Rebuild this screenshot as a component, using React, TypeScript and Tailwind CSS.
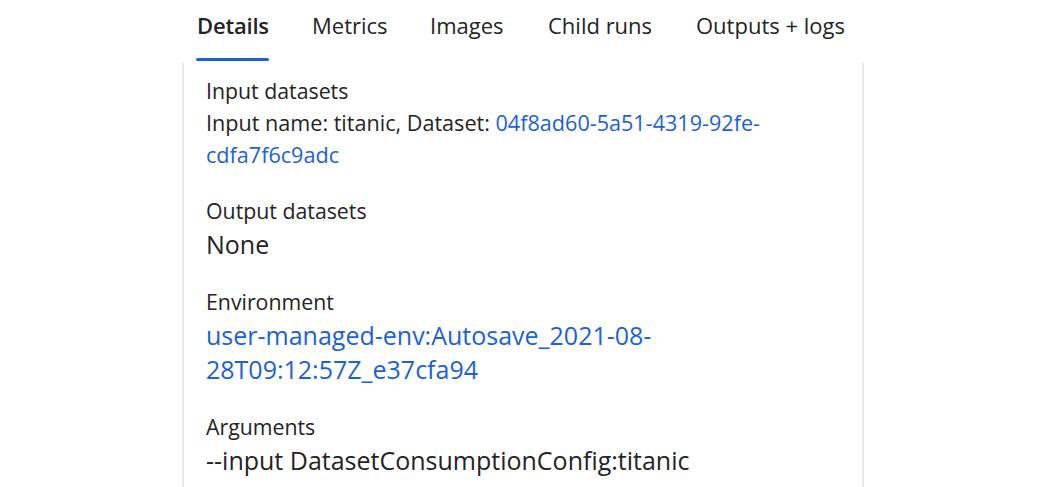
import React from 'react';

const tabs = [
  { label: 'Details', width: 'w-[115px]', active: true },
  { label: 'Metrics', width: 'w-[118px]' },
  { label: 'Images', width: 'w-[118px]' },
  { label: 'Child runs', width: 'w-[148px]' },
  { label: 'Outputs + logs', width: 'w-[160px]' },
];

function Field({ label, children }: { label: string; children: React.ReactNode }) {
  return (
    <div className="flex flex-col">
      <div className="text-[21.3px] leading-[32px] text-[#242424] whitespace-nowrap">{label}</div>
      {children}
    </div>
  );
}

export default function App() {
  return (
    <div
      className="w-[1049px] h-[487px] overflow-hidden bg-white text-[#242424]"
      style={{ fontFamily: '"Open Sans", "Noto Sans", sans-serif' }}
    >
      <div className="ml-[182px] w-[682px]">
        {/* Tabs */}
        <div className="flex pl-[15px] h-[63px]">
          {tabs.map((t) => (
            <div key={t.label} className={`${t.width} flex flex-col shrink-0`}>
              <div
                className={`h-[58px] pt-[9px] text-[22px] leading-[32px] whitespace-nowrap ${
                  t.active ? 'font-semibold tracking-[-0.2px]' : 'font-normal tracking-[0px]'
                }`}
              >
                {t.label}
              </div>
              {t.active && <div className="h-[3px] w-[73px] -ml-[1px] rounded-full bg-[#1b62d6]" />}
            </div>
          ))}
        </div>

        {/* Panel */}
        <div className="border-l-2 border-r-2 border-[#e7e9ee] h-[424px] pl-[22px] pt-[12px] flex flex-col gap-[25px]">
          <Field label="Input datasets">
            <div className="text-[21.6px] leading-[32px] whitespace-nowrap">
              Input name: titanic, Dataset: <span className="text-[#1b62d6]">04f8ad60-5a51-4319-92fe-</span>
            </div>
            <div className="text-[21.6px] leading-[31px] text-[#1b62d6] whitespace-nowrap">cdfa7f6c9adc</div>
          </Field>

          <Field label="Output datasets">
            <div className="text-[25px] leading-[34px]">None</div>
          </Field>

          <Field label="Environment">
            <div className="text-[25px] leading-[34px] text-[#1b62d6] whitespace-nowrap">
              user-managed-env:Autosave_2021-08-
            </div>
            <div className="text-[25px] leading-[34px] text-[#1b62d6] whitespace-nowrap">28T09:12:57Z_e37cfa94</div>
          </Field>

          <Field label="Arguments">
            <div className="text-[25px] leading-[34px] whitespace-nowrap">--input DatasetConsumptionConfig:titanic</div>
          </Field>
        </div>
      </div>
    </div>
  );
}
